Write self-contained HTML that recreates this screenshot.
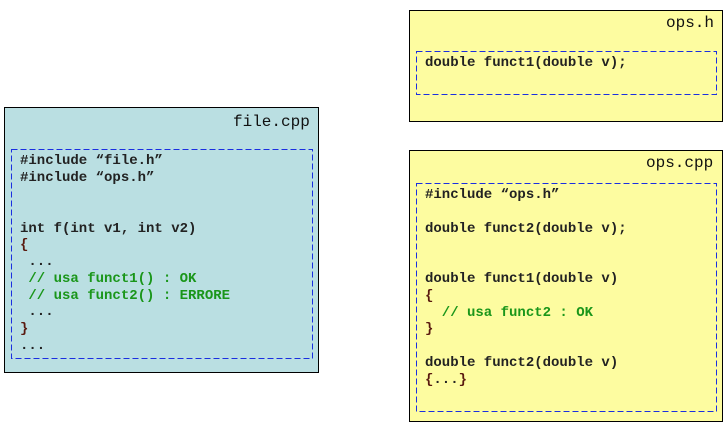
<html><head><style>
body{margin:0;width:728px;height:429px;background:#fff;position:relative;overflow:hidden;font-family:"Liberation Mono",monospace}
.box{position:absolute;border:1px solid #000;box-sizing:border-box}
svg{position:absolute}
.t{position:absolute;font-size:16px;color:#111}
.l{position:absolute;font-size:14px;font-weight:bold;color:#222;white-space:pre;line-height:14px}
.g{color:#1a961a}.r{color:#5a1a10}
</style></head><body>
<div class="box" style="left:4px;top:107px;width:315px;height:266px;background:#badfe2"></div>
<svg style="left:11px;top:149px" width="302" height="210"><rect x="0.5" y="0.5" width="301" height="209" fill="none" stroke="#1a2ee0" stroke-dasharray="6 3"/></svg>
<div class="t" style="left:233px;top:113px">file.cpp</div>
<div class="l" style="left:20px;top:154px">#include “file.h”</div>
<div class="l" style="left:20px;top:171px">#include “ops.h”</div>
<div class="l" style="left:20px;top:222px">int f(int v1, int v2)</div>
<div class="l r" style="left:20px;top:238px">{</div>
<div class="l" style="left:20px;top:255px"> ...</div>
<div class="l g" style="left:20px;top:272px"> // usa funct1() : OK</div>
<div class="l g" style="left:20px;top:289px"> // usa funct2() : ERRORE</div>
<div class="l" style="left:20px;top:305px"> ...</div>
<div class="l r" style="left:20px;top:322px">}</div>
<div class="l" style="left:20px;top:339px">...</div>

<div class="box" style="left:409px;top:10px;width:314px;height:112px;background:#fdfca0"></div>
<svg style="left:416px;top:51px" width="301" height="44"><rect x="0.5" y="0.5" width="300" height="43" fill="none" stroke="#1a2ee0" stroke-dasharray="6 3"/></svg>
<div class="t" style="left:666px;top:14px">ops.h</div>
<div class="l" style="left:425px;top:56px">double funct1(double v);</div>

<div class="box" style="left:409px;top:150px;width:314px;height:272px;background:#fdfca0"></div>
<svg style="left:416px;top:183px" width="301" height="229"><rect x="0.5" y="0.5" width="300" height="228" fill="none" stroke="#1a2ee0" stroke-dasharray="6 3"/></svg>
<div class="t" style="left:646px;top:154px">ops.cpp</div>
<div class="l" style="left:425px;top:188px">#include “ops.h”</div>
<div class="l" style="left:425px;top:222px">double funct2(double v);</div>
<div class="l" style="left:425px;top:272px">double funct1(double v)</div>
<div class="l r" style="left:425px;top:289px">{</div>
<div class="l g" style="left:425px;top:306px">  // usa funct2 : OK</div>
<div class="l r" style="left:425px;top:322px">}</div>
<div class="l" style="left:425px;top:356px">double funct2(double v)</div>
<div class="l" style="left:425px;top:373px"><span class="r">{</span>...<span class="r">}</span></div>
</body></html>
